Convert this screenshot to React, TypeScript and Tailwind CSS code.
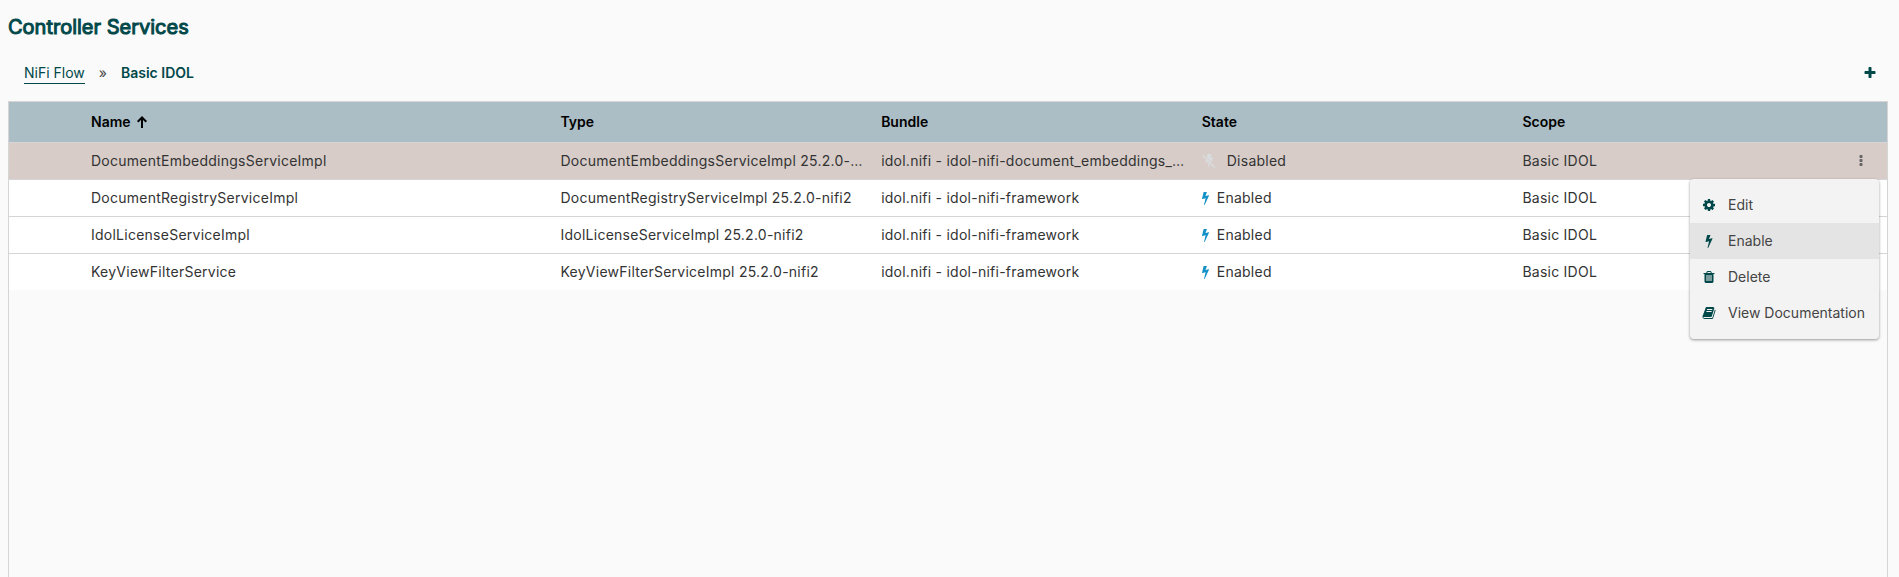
import type { ReactNode } from "react";

const ICONS = {
  bolt: "M1333 566q18 20 7 44l-540 1157q-13 25-42 25-4 0-14-2-17-5-25.5-19t-4.5-30l197-808-406 101q-4 1-12 1-18 0-31-11-18-15-13-39l201-825q4-14 16-23t28-9h328q19 0 32 12.5t13 29.5q0 8-5 18l-171 443 396-98q8-2 12-2 19 0 34 15z",
  cog: "M1152 896q0-106-75-181t-181-75-181 75-75 181 75 181 181 75 181-75 75-181zm512-109v222q0 12-8 23t-20 13l-185 28q-19 54-39 91 35 50 107 138 10 12 10 25t-9 23q-27 37-99 108t-94 71q-12 0-26-9l-138-108q-44 23-91 38-16 136-29 186-7 28-36 28h-222q-14 0-24.5-8.5t-11.5-21.5l-28-184q-49-16-90-37l-141 107q-10 9-25 9-14 0-25-11-126-114-165-168-7-10-7-23 0-12 8-23 15-21 51-66.5t54-70.5q-27-50-41-99l-183-27q-13-2-21-12.5t-8-23.5v-222q0-12 8-23t19-13l186-28q14-46 39-92-40-57-107-138-10-12-10-24 0-10 9-23 26-36 98.5-107.5t94.5-71.5q13 0 26 10l138 107q44-23 91-38 16-136 29-186 7-28 36-28h222q14 0 24.5 8.5t11.5 21.5l28 184q49 16 90 37l142-107q9-9 24-9 13 0 25 10 129 119 165 170 7 8 7 22 0 12-8 23-15 21-51 66.5t-54 70.5q26 50 41 98l183 28q13 2 21 12.5t8 23.5z",
  trash: "M704 1376v-704q0-14-9-23t-23-9h-64q-14 0-23 9t-9 23v704q0 14 9 23t23 9h64q14 0 23-9t9-23zm256 0v-704q0-14-9-23t-23-9h-64q-14 0-23 9t-9 23v704q0 14 9 23t23 9h64q14 0 23-9t9-23zm256 0v-704q0-14-9-23t-23-9h-64q-14 0-23 9t-9 23v704q0 14 9 23t23 9h64q14 0 23-9t9-23zm-544-992h448l-48-117q-7-9-17-11h-317q-10 2-17 11zm928 32v64q0 14-9 23t-23 9h-96v948q0 83-47 143.5t-113 60.5h-832q-66 0-113-58.5t-47-141.5v-952h-96q-14 0-23-9t-9-23v-64q0-14 9-23t23-9h309l70-167q15-37 54-63t79-26h320q40 0 79 26t54 63l70 167h309q14 0 23 9t9 23z",
  book: "M1703 478q40 57 18 129l-275 906q-19 64-76.5 107.5t-122.5 43.5h-923q-77 0-148.5-53.5t-99.5-131.5q-24-67-2-127 0-4 3-27t4-37q1-8-3-21.5t-3-19.5q2-11 8-21t16.5-23.5 16.5-23.5q23-38 45-91.5t30-91.5q3-10 .5-30t-.5-28q3-11 17-28t17-23q21-36 42-92t25-90q1-9-2.5-32t.5-28q4-13 22-30.5t22-22.5q19-26 42.5-84.5t27.5-96.5q1-8-3-25.5t-2-26.5q2-8 9-18t18-23 17-21q8-12 16.5-30.5t15-35 16-36 19.5-32 26.5-23.5 36-11.5 47.5 5.5l-1 3q38-9 51-9h761q74 0 114 56t18 130l-274 906q-36 119-71.5 153.5t-128.5 34.5h-869q-27 0-38 15-11 16-1 43 24 70 144 70h923q29 0 56-15.5t35-41.5l300-987q7-22 5-57 38 15 59 43zm-1064 2q-4 13 2 22.5t20 9.5h608q13 0 25.5-9.5t16.5-22.5l21-64q4-13-2-22.5t-20-9.5h-608q-13 0-25.5 9.5t-16.5 22.5zm-83 256q-4 13 2 22.5t20 9.5h608q13 0 25.5-9.5t16.5-22.5l21-64q4-13-2-22.5t-20-9.5h-608q-13 0-25.5 9.5t-16.5 22.5z",
  plus: "M1600 736v192q0 40-28 68t-68 28h-416v416q0 40-28 68t-68 28h-192q-40 0-68-28t-28-68v-416h-416q-40 0-68-28t-28-68v-192q0-40 28-68t68-28h416v-416q0-40 28-68t68-28h192q40 0 68 28t28 68v416h416q40 0 68 28t28 68z",
  dots: "M1088 1248v192q0 40-28 68t-68 28h-192q-40 0-68-28t-28-68v-192q0-40 28-68t68-28h192q40 0 68 28t28 68zm0-512v192q0 40-28 68t-68 28h-192q-40 0-68-28t-28-68v-192q0-40 28-68t68-28h192q40 0 68 28t28 68zm0-512v192q0 40-28 68t-68 28h-192q-40 0-68-28t-28-68v-192q0-40 28-68t68-28h192q40 0 68 28t28 68z",
};

type IconName = keyof typeof ICONS;

function Icon({ name, className = "size-3.5" }: { name: IconName; className?: string }) {
  return (
    <svg viewBox="0 0 1792 1792" fill="currentColor" aria-hidden="true" className={`shrink-0 ${className}`}>
      <path d={ICONS[name]} />
    </svg>
  );
}

function DisabledBolt() {
  return (
    <svg viewBox="0 0 14 14" fill="currentColor" aria-hidden="true" className="size-3.5 shrink-0 text-[#dadde0]">
      <path d="M5.500 0h4L8.100 4 11.500 3.200 9.300 8 5 3.600zM4.200 4.800l3 3L3.500 8.700zM6.500 8.500l1.600 1.500L6 14z" />
      <path d="M1 1.500 13 13.500" fill="none" stroke="currentColor" strokeWidth="1.200" />
    </svg>
  );
}

function SortArrow() {
  return (
    <svg viewBox="0 0 12 12" fill="none" stroke="currentColor" strokeWidth="2" aria-hidden="true" className="size-3">
      <path d="M5 12V1.500M.7 5.800 5 1.500l4.300 4.300" />
    </svg>
  );
}

type Service = { name: string; type: string; bundle: string; enabled: boolean; selected?: boolean };

const SERVICES: Service[] = [
  {
    name: "DocumentEmbeddingsServiceImpl",
    type: "DocumentEmbeddingsServiceImpl 25.2.0-nifi2",
    bundle: "idol.nifi - idol-nifi-document_embeddings_service",
    enabled: false,
    selected: true,
  },
  {
    name: "DocumentRegistryServiceImpl",
    type: "DocumentRegistryServiceImpl 25.2.0-nifi2",
    bundle: "idol.nifi - idol-nifi-framework",
    enabled: true,
  },
  {
    name: "IdolLicenseServiceImpl",
    type: "IdolLicenseServiceImpl 25.2.0-nifi2",
    bundle: "idol.nifi - idol-nifi-framework",
    enabled: true,
  },
  {
    name: "KeyViewFilterService",
    type: "KeyViewFilterServiceImpl 25.2.0-nifi2",
    bundle: "idol.nifi - idol-nifi-framework",
    enabled: true,
  },
];

const MENU: { icon: IconName; label: string; active?: boolean }[] = [
  { icon: "cog", label: "Edit" },
  { icon: "bolt", label: "Enable", active: true },
  { icon: "trash", label: "Delete" },
  { icon: "book", label: "View Documentation" },
];

function ActionsMenu() {
  return (
    <div
      role="menu"
      className="absolute top-full right-2 z-10 rounded-sm bg-[#f3f3f3] py-2 shadow-[0_1px_3px_rgba(0,0,0,0.4)]"
    >
      {MENU.map((item) => (
        <button
          key={item.label}
          type="button"
          role="menuitem"
          className={`flex h-9 w-full items-center gap-3 pr-3.5 pl-3 text-left text-sm tracking-normal whitespace-nowrap text-[#444] ${
            item.active ? "bg-[#e4e4e4]" : ""
          }`}
        >
          <Icon name={item.icon} className="size-3.5 text-[#004849]" />
          {item.label}
        </button>
      ))}
    </div>
  );
}

function HeaderCell({ children }: { children: ReactNode }) {
  return (
    <th scope="col" className="border-b border-[#d5d5d5] pl-4 text-left font-semibold">
      {children}
    </th>
  );
}

function Cell({ last, children }: { last: boolean; children: ReactNode }) {
  return <td className={`truncate border-[#d5d5d5] pl-4 ${last ? "" : "border-b"}`}>{children}</td>;
}

export default function App() {
  return (
    <main className="flex min-h-screen flex-col bg-[#fafafa] pr-[11px] pl-2 font-['Inter',sans-serif] text-sm text-[#333]">
      <h1 className="pt-[11px] text-xl leading-8 font-normal text-[#004849] [-webkit-text-stroke:1px_#004849]">
        Controller Services
      </h1>
      <div className="flex h-[58px] items-center justify-between pt-0.5 pr-[11px] pl-4">
        <nav aria-label="Breadcrumb" className="flex items-baseline gap-3.5 text-[#004849]">
          <a href="#nifi-flow" className="border-b border-[#004849]">
            NiFi Flow
          </a>
          <span className="text-[#444]">»</span>
          <span className="font-semibold">Basic IDOL</span>
        </nav>
        <button type="button" aria-label="Add controller service" className="text-[#004849]">
          <Icon name="plus" />
        </button>
      </div>
      <div className="grow border-x border-t border-[#d5d5d5]">
        <table className="w-full table-fixed border-separate border-spacing-0">
          <colgroup>
            <col className="w-[66px]" />
            <col className="w-1/4" />
            <col />
            <col />
            <col />
            <col />
            <col className="w-[60px]" />
          </colgroup>
          <thead>
            <tr className="h-[41px] bg-[#abbdc5] text-black">
              <HeaderCell>{null}</HeaderCell>
              <HeaderCell>
                <span className="flex items-center gap-1.5">
                  Name
                  <SortArrow />
                </span>
              </HeaderCell>
              <HeaderCell>Type</HeaderCell>
              <HeaderCell>Bundle</HeaderCell>
              <HeaderCell>State</HeaderCell>
              <HeaderCell>Scope</HeaderCell>
              <HeaderCell>{null}</HeaderCell>
            </tr>
          </thead>
          <tbody className="tracking-[0.25px]">
            {SERVICES.map((service, index) => {
              const last = index === SERVICES.length - 1;
              return (
                <tr
                  key={service.name}
                  className={`${last ? "h-9" : "h-[37px]"} ${service.selected ? "bg-[#d7ccc8]" : "bg-white"}`}
                >
                  <Cell last={last}>{null}</Cell>
                  <Cell last={last}>{service.name}</Cell>
                  <Cell last={last}>{service.type}</Cell>
                  <Cell last={last}>{service.bundle}</Cell>
                  <Cell last={last}>
                    {service.enabled ? (
                      <span className="flex items-center gap-2">
                        <svg viewBox="448 0 896 1792" fill="currentColor" aria-hidden="true" className="h-3.5 w-[7px] text-[#1491c7]">
                          <path d={ICONS.bolt} />
                        </svg>
                        Enabled
                      </span>
                    ) : (
                      <span className="flex items-center gap-[11px]">
                        <DisabledBolt />
                        Disabled
                      </span>
                    )}
                  </Cell>
                  <Cell last={last}>Basic IDOL</Cell>
                  <td className={`relative border-[#d5d5d5] ${last ? "" : "border-b"}`}>
                    {service.selected && (
                      <>
                        <button type="button" aria-label="Actions" className="ml-[27px] flex text-[#666]">
                          <Icon name="dots" />
                        </button>
                        <ActionsMenu />
                      </>
                    )}
                  </td>
                </tr>
              );
            })}
          </tbody>
        </table>
      </div>
    </main>
  );
}
